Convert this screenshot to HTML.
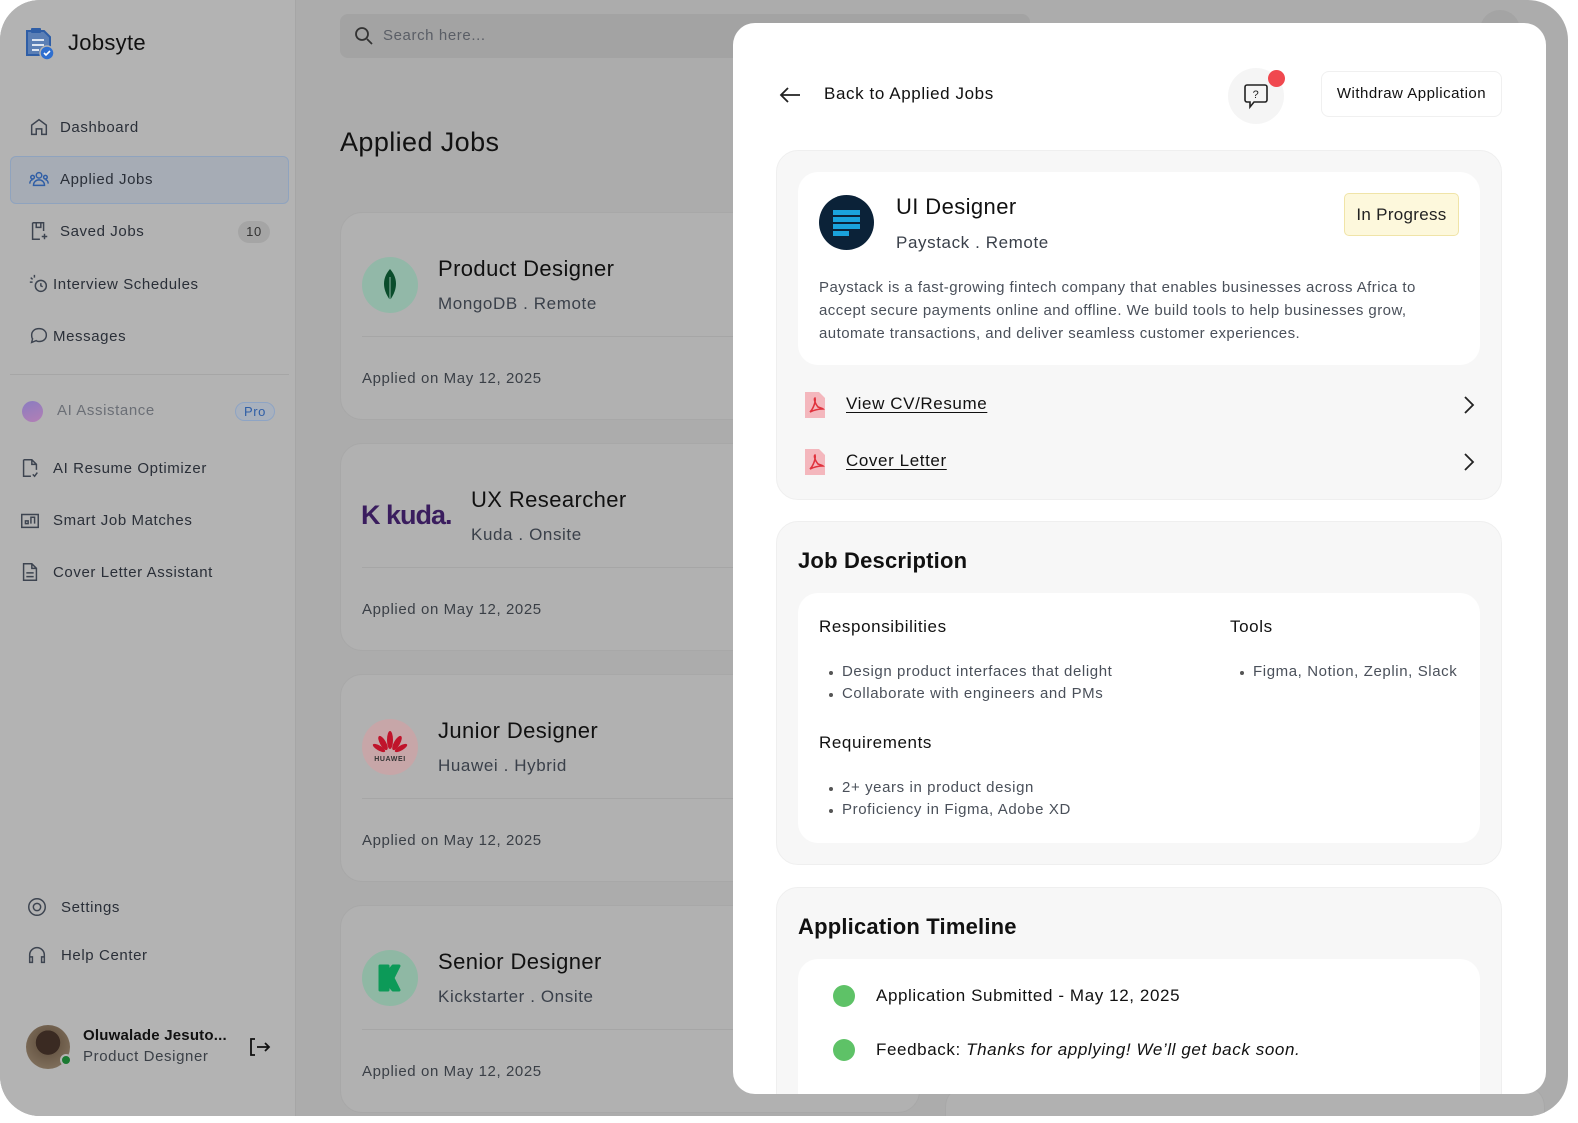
<!DOCTYPE html>
<html><head><meta charset="utf-8"><style>
*{box-sizing:border-box;margin:0;padding:0}
body{width:1578px;height:1123px;background:#fff;font-family:"Liberation Sans",sans-serif;position:relative;overflow:hidden;letter-spacing:0.6px}
.frame{position:absolute;left:0;top:0;width:1568px;height:1116px;border-radius:40px;background:#acacac;overflow:hidden}
.side{position:absolute;left:0;top:0;width:296px;height:1116px;background:#b3b3b3;border-right:1px solid #a6a6a6}
.abs{position:absolute;white-space:nowrap}
.nav{position:absolute;left:28px;font-size:15px;color:#2a2f38;display:flex;align-items:center;gap:10px}
.nav svg{width:22px;height:22px;fill:none;stroke:#3d4450;stroke-width:1.6}
.card{position:absolute;left:340px;width:580px;height:208px;border-radius:22px;background:#b1b1b1;border:1px solid #a8a8a8}
.card .logo{position:absolute;left:21px;top:44px;width:56px;height:56px;border-radius:50%}
.card .t{position:absolute;left:97px;top:43px;font-size:22px;color:#111;letter-spacing:0.4px}
.card .s{position:absolute;left:97px;top:81px;font-size:17px;color:#3a404a}
.card .hr{position:absolute;left:21px;right:0;top:123px;border-top:1px solid #a6a6a6}
.card .d{position:absolute;left:21px;top:157px;font-size:15px;color:#3a3f46}
.modal{position:absolute;left:733px;top:23px;width:813px;height:1071px;background:#fff;border-radius:22px;overflow:hidden}
.sec{position:absolute;left:43px;width:726px;background:#f7f7f7;border:1px solid #efefef;border-radius:22px}
.inner{position:absolute;left:21px;right:21px;background:#fff;border-radius:20px}
.h{font-size:22px;color:#111;font-weight:bold;letter-spacing:0.2px}
ul{list-style:none}
li{font-size:15px;color:#4a505a;line-height:22px;padding-left:23px;position:relative}
li:before{content:"";position:absolute;left:10px;top:10px;width:4px;height:4px;border-radius:50%;background:#555}
.sub{font-size:17px;color:#111}
</style></head><body>
<div class="frame">
 <div class="side">
  <svg class="abs" style="left:24px;top:27px" width="32" height="34" viewBox="0 0 32 34"><path d="M3 4h17l6 6v18H3z" fill="#5b7fb5" stroke="#2f5ea6" stroke-width="2"/><rect x="7" y="1" width="10" height="5" rx="1" fill="#2f5ea6"/><path d="M8 13h12M8 18h12M8 23h7" stroke="#dde6f2" stroke-width="2"/><circle cx="23" cy="26" r="7" fill="#2f6fcf" stroke="#b3b3b3" stroke-width="1.5"/><path d="M20 26l2 2 4-4" stroke="#fff" stroke-width="1.6" fill="none"/></svg>
  <div class="abs" style="left:68px;top:30px;font-size:22px;color:#111;letter-spacing:0.3px">Jobsyte</div>
  <div class="nav" style="top:116px"><svg viewBox="0 0 24 24"><path d="M4 20V10l8-6 8 6v10h-5v-6H9v6z"/></svg>Dashboard</div>
  <div class="abs" style="left:10px;top:156px;width:279px;height:48px;border-radius:6px;background:#a6acb5;border:1px solid #8fa3be"></div>
  <div class="nav" style="top:168px"><svg viewBox="0 0 24 24" style="stroke:#2f5ea6"><circle cx="12" cy="8" r="3"/><circle cx="5" cy="10" r="2"/><circle cx="19" cy="10" r="2"/><path d="M6 19c0-4 3-6 6-6s6 2 6 6zM2 17c0-2 1-4 3-4M22 17c0-2-1-4-3-4"/></svg>Applied Jobs</div>
  <div class="nav" style="top:220px"><svg viewBox="0 0 24 24"><path d="M5 3h12v9M5 3v18h8M9 3v5h5V3M15 18h6M18 15v6"/></svg>Saved Jobs</div>
  <div class="abs" style="left:238px;top:221px;width:32px;height:22px;border-radius:11px;background:#a5a5a5;font-size:13px;color:#333;text-align:center;line-height:22px">10</div>
  <div class="nav" style="top:273px;gap:3px"><svg viewBox="0 0 24 24"><circle cx="14" cy="14" r="6"/><path d="M14 11v3l2 1M3 5l2 2M7 2v3M2 10h3"/></svg>Interview Schedules</div>
  <div class="nav" style="top:325px;gap:3px"><svg viewBox="0 0 24 24"><path d="M12 4c5 0 8 3 8 7s-3 7-8 7c-1 0-2 0-3-1l-5 2 1-4c-1-1-1-3-1-4 0-4 3-7 8-7z"/></svg>Messages</div>
  <div class="abs" style="left:10px;top:374px;width:279px;border-top:1px solid #a6a6a6"></div>
  <div class="abs" style="left:22px;top:401px;width:21px;height:21px;border-radius:50%;background:linear-gradient(160deg,#8a7cc0,#b37fb5)"></div>
  <div class="abs" style="left:57px;top:402px;font-size:15px;color:#6b6f76">AI Assistance</div>
  <div class="abs" style="left:235px;top:402px;width:40px;height:19px;border-radius:10px;border:1px solid #8ea4c4;background:#a9b1bd;font-size:13px;color:#2f5ea6;text-align:center;line-height:17px">Pro</div>
  <div class="nav" style="top:457px;left:19px;gap:12px"><svg viewBox="0 0 24 24"><path d="M5 3h9l5 5v6M5 3v18h8M14 3v5h5M15 19l2 2 3-4"/></svg>AI Resume Optimizer</div>
  <div class="nav" style="top:509px;left:19px;gap:12px"><svg viewBox="0 0 24 24"><path d="M3 20V6h18v14zM3 20h18M7 16v-3h3v3zM13 16V9h4v7"/></svg>Smart Job Matches</div>
  <div class="nav" style="top:561px;left:19px;gap:12px"><svg viewBox="0 0 24 24"><path d="M5 3h9l5 5v13H5zM14 3v5h5M8 13h8M8 17h8"/></svg>Cover Letter Assistant</div>
  <div class="nav" style="top:896px;left:26px;gap:13px"><svg viewBox="0 0 24 24"><circle cx="12" cy="12" r="4"/><circle cx="12" cy="12" r="9"/></svg>Settings</div>
  <div class="nav" style="top:944px;left:26px;gap:13px"><svg viewBox="0 0 24 24"><path d="M4 17v-5a8 8 0 0 1 16 0v5M4 14h3v6H4zM17 14h3v6h-3z"/></svg>Help Center</div>
  <div class="abs" style="left:26px;top:1025px;width:44px;height:44px;border-radius:50%;background:radial-gradient(circle at 50% 40%,#3a2a22 0 35%,#6b5a48 36%,#8a7a66)"></div>
  <div class="abs" style="left:60px;top:1054px;width:12px;height:12px;border-radius:50%;background:#1a7a32;border:2px solid #b3b3b3"></div>
  <div class="abs" style="left:83px;top:1027px;font-size:15px;font-weight:bold;color:#111;letter-spacing:0.2px">Oluwalade Jesuto...</div>
  <div class="abs" style="left:83px;top:1048px;font-size:15px;color:#3a3f46">Product Designer</div>
  <svg class="abs" style="left:248px;top:1036px" width="24" height="22" viewBox="0 0 24 22" fill="none" stroke="#111" stroke-width="1.8"><path d="M7 3H3v16h4M9 11h12M17 7l4 4-4 4"/></svg>
 </div>
 <div class="abs" style="left:340px;top:14px;width:690px;height:44px;border-radius:8px;background:#a3a3a3"></div>
 <svg class="abs" style="left:354px;top:26px" width="20" height="20" viewBox="0 0 20 20" fill="none" stroke="#333" stroke-width="1.8"><circle cx="8" cy="8" r="6"/><path d="M13 13l5 5"/></svg>
 <div class="abs" style="left:383px;top:27px;font-size:15px;color:#5a5e66">Search here...</div>
 <div class="abs" style="left:340px;top:127px;font-size:27px;color:#111;letter-spacing:0.4px">Applied Jobs</div>
 <div class="card" style="top:212px"><div class="logo" style="background:#92b8a8"><svg width="56" height="56" viewBox="0 0 56 56"><path d="M28 12c-8 9-8 20 0 31 8-11 8-22 0-31z" fill="#0a4d2c"/><path d="M28 20v26" stroke="#92b8a8" stroke-width="1"/></svg></div><div class="t">Product Designer</div><div class="s">MongoDB . Remote</div><div class="hr"></div><div class="d">Applied on May 12, 2025</div></div>
 <div class="card" style="top:443px"><div class="abs" style="left:20px;top:56px;font-size:27px;font-weight:bold;color:#3a1d5e;letter-spacing:-1px">K kuda.</div><div class="t" style="left:130px">UX Researcher</div><div class="s" style="left:130px">Kuda . Onsite</div><div class="hr"></div><div class="d">Applied on May 12, 2025</div></div>
 <div class="card" style="top:674px"><div class="logo" style="background:#c7a6a8"><svg width="56" height="56" viewBox="0 0 56 56"><g fill="#c0142b"><ellipse cx="28" cy="21" rx="3" ry="9"/><ellipse cx="21" cy="24" rx="3" ry="8" transform="rotate(-30 21 24)"/><ellipse cx="35" cy="24" rx="3" ry="8" transform="rotate(30 35 24)"/><ellipse cx="17" cy="29" rx="2.5" ry="7" transform="rotate(-60 17 29)"/><ellipse cx="39" cy="29" rx="2.5" ry="7" transform="rotate(60 39 29)"/></g><text x="28" y="42" font-size="7" text-anchor="middle" font-family="Liberation Sans" font-weight="bold" fill="#333">HUAWEI</text></svg></div><div class="t">Junior Designer</div><div class="s">Huawei . Hybrid</div><div class="hr"></div><div class="d">Applied on May 12, 2025</div></div>
 <div class="card" style="top:905px"><div class="logo" style="background:#8fb8a4"><svg width="56" height="56" viewBox="0 0 56 56"><path d="M18 16h8v6l5-6h6l-6 12 6 12h-6l-5-6v6h-8z" fill="#0c9a58" stroke="#0c9a58" stroke-width="3" stroke-linejoin="round"/></svg></div><div class="t">Senior Designer</div><div class="s">Kickstarter . Onsite</div><div class="hr"></div><div class="d">Applied on May 12, 2025</div></div>
 <div class="abs" style="left:945px;top:1085px;width:600px;height:60px;border-radius:22px;background:#b1b1b1;border:1px solid #a8a8a8"></div>
 <div class="abs" style="left:1480px;top:10px;width:40px;height:40px;border-radius:50%;background:#a4a4a4"></div>
</div>

<div class="modal">
 <svg class="abs" style="left:45px;top:62px" width="24" height="20" viewBox="0 0 24 20" fill="none" stroke="#222" stroke-width="1.8"><path d="M22 10H3M10 3l-7 7 7 7"/></svg>
 <div class="abs" style="left:91px;top:61px;font-size:17px;color:#111">Back to Applied Jobs</div>
 <div class="abs" style="left:495px;top:45px;width:56px;height:56px;border-radius:50%;background:#f5f5f5"></div>
 <svg class="abs" style="left:509px;top:58px" width="28" height="30" viewBox="0 0 28 30" fill="none" stroke="#222" stroke-width="1.6"><path d="M5 4h18a2 2 0 0 1 2 2v13a2 2 0 0 1-2 2H12l-4 5v-5H5a2 2 0 0 1-2-2V6a2 2 0 0 1 2-2z"/><text x="14" y="17" font-size="11" text-anchor="middle" fill="#222" stroke="none" font-family="Liberation Sans">?</text></svg>
 <div class="abs" style="left:535px;top:47px;width:17px;height:17px;border-radius:50%;background:#f0484f"></div>
 <div class="abs" style="left:588px;top:48px;width:181px;height:46px;border-radius:8px;border:1px solid #f0f0f0;font-size:15px;color:#111;text-align:center;line-height:44px;letter-spacing:0.5px">Withdraw Application</div>

 <div class="sec" style="top:127px;height:350px">
  <div class="inner" style="top:21px;height:193px">
   <div class="abs" style="left:21px;top:23px;width:55px;height:55px;border-radius:50%;background:#0b2238"><svg width="55" height="55" viewBox="0 0 55 55"><g fill="#1aa3dc"><rect x="14" y="15" width="27" height="5"/><rect x="14" y="22" width="27" height="5"/><rect x="14" y="29" width="27" height="5"/><rect x="14" y="36" width="16" height="5"/></g></svg></div>
   <div class="abs" style="left:98px;top:22px;font-size:22px;color:#111;letter-spacing:0.4px">UI Designer</div>
   <div class="abs" style="left:98px;top:61px;font-size:17px;color:#3a404a">Paystack . Remote</div>
   <div class="abs" style="left:546px;top:21px;width:115px;height:43px;border-radius:5px;background:#fdf8dc;border:1px solid #f0e4a8;font-size:17px;color:#222;text-align:center;line-height:41px;letter-spacing:0.3px">In Progress</div>
   <div class="abs" style="left:21px;top:104px;font-size:15px;color:#4a505a;line-height:23px;letter-spacing:0.45px">Paystack is a fast-growing fintech company that enables businesses across Africa to<br>accept secure payments online and offline. We build tools to help businesses grow,<br>automate transactions, and deliver seamless customer experiences.</div>
  </div>
  <svg class="abs" style="left:27px;top:240px" width="22" height="28" viewBox="0 0 22 28"><path d="M1 1h14l6 6v20H1z" fill="#f4b7bd"/><path d="M6 21c3-3 6-10 5-14-1 0-1 4 3 9 2 1 4 1 5 2-4 0-9 1-13 3z" fill="none" stroke="#e0323d" stroke-width="1.6"/></svg>
  <div class="abs" style="left:69px;top:243px;font-size:17px;color:#111;text-decoration:underline;text-underline-offset:3px">View CV/Resume</div>
  <svg class="abs" style="left:686px;top:244px" width="12" height="20" viewBox="0 0 12 20" fill="none" stroke="#222" stroke-width="1.8"><path d="M2 2l8 8-8 8"/></svg>
  <svg class="abs" style="left:27px;top:297px" width="22" height="28" viewBox="0 0 22 28"><path d="M1 1h14l6 6v20H1z" fill="#f4b7bd"/><path d="M6 21c3-3 6-10 5-14-1 0-1 4 3 9 2 1 4 1 5 2-4 0-9 1-13 3z" fill="none" stroke="#e0323d" stroke-width="1.6"/></svg>
  <div class="abs" style="left:69px;top:300px;font-size:17px;color:#111;text-decoration:underline;text-underline-offset:3px">Cover Letter</div>
  <svg class="abs" style="left:686px;top:301px" width="12" height="20" viewBox="0 0 12 20" fill="none" stroke="#222" stroke-width="1.8"><path d="M2 2l8 8-8 8"/></svg>
 </div>

 <div class="sec" style="top:498px;height:344px">
  <div class="abs h" style="left:21px;top:26px">Job Description</div>
  <div class="inner" style="top:71px;height:250px">
   <div class="abs sub" style="left:21px;top:24px">Responsibilities</div>
   <ul class="abs" style="left:21px;top:68px"><li>Design product interfaces that delight</li><li>Collaborate with engineers and PMs</li></ul>
   <div class="abs sub" style="left:21px;top:140px">Requirements</div>
   <ul class="abs" style="left:21px;top:184px"><li>2+ years in product design</li><li>Proficiency in Figma, Adobe XD</li></ul>
   <div class="abs sub" style="left:432px;top:24px">Tools</div>
   <ul class="abs" style="left:432px;top:68px"><li>Figma, Notion, Zeplin, Slack</li></ul>
  </div>
 </div>

 <div class="sec" style="top:864px;height:260px">
  <div class="abs h" style="left:21px;top:26px">Application Timeline</div>
  <div class="inner" style="top:71px;height:200px">
   <div class="abs" style="left:35px;top:26px;width:22px;height:22px;border-radius:50%;background:#5ec267"></div>
   <div class="abs" style="left:78px;top:27px;font-size:17px;color:#111">Application Submitted - May 12, 2025</div>
   <div class="abs" style="left:35px;top:80px;width:22px;height:22px;border-radius:50%;background:#5ec267"></div>
   <div class="abs" style="left:78px;top:81px;font-size:17px;color:#111">Feedback: <i>Thanks for applying! We’ll get back soon.</i></div>
  </div>
 </div>
</div>
</body></html>
